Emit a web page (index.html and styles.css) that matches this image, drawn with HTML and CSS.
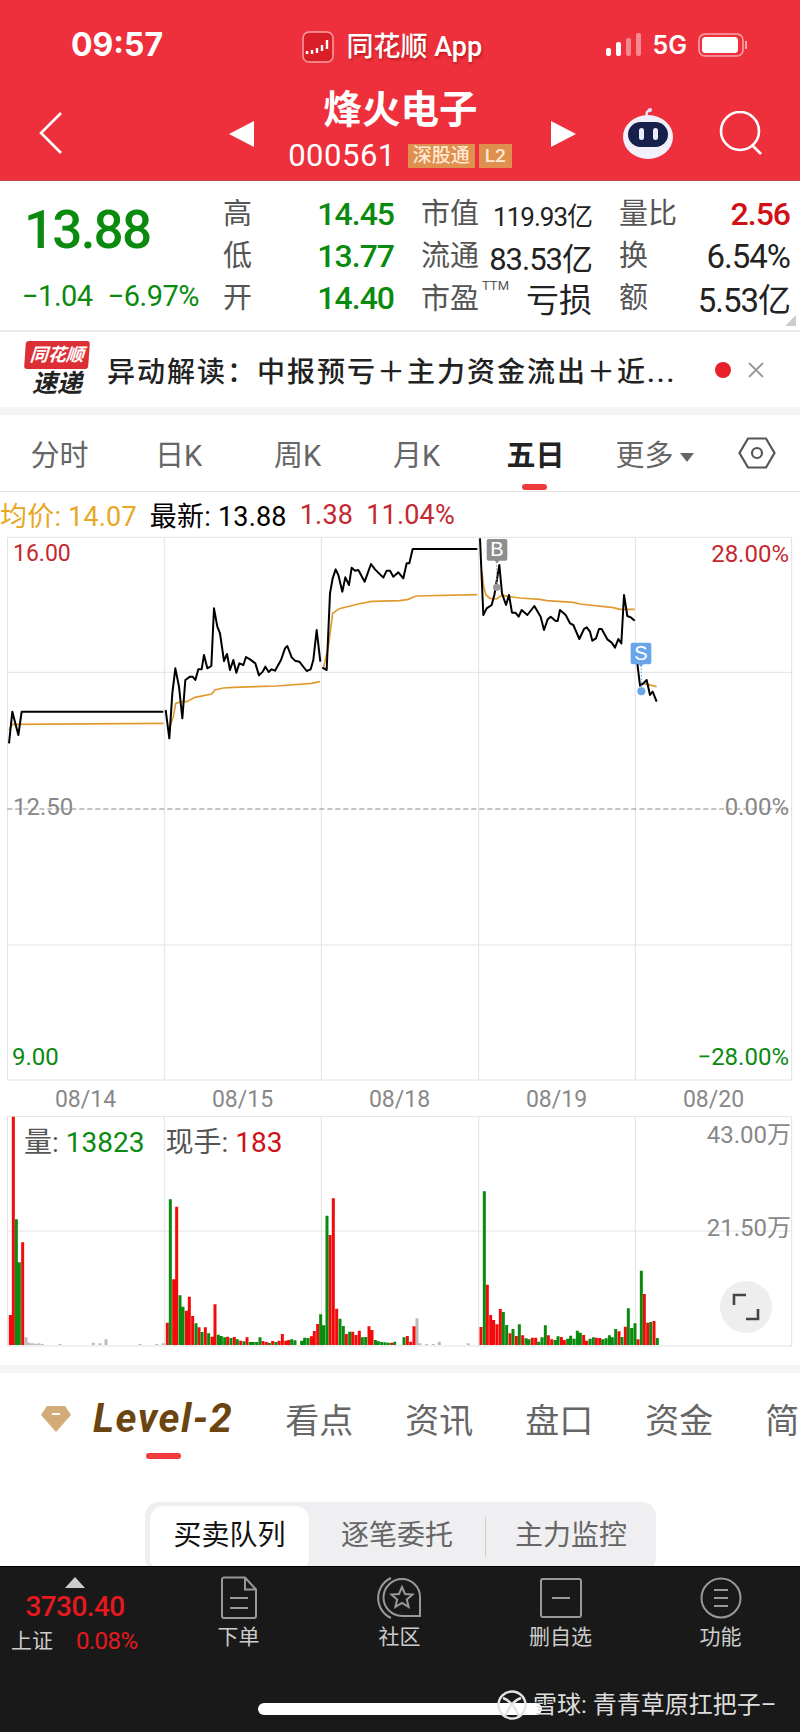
FILE: index.html
```html
<!DOCTYPE html>
<html>
<head>
    <title>烽火电子 000561</title>
    <link rel="stylesheet" href="styles.css">
</head>
<body>
<div class="phone">
    <header class="top">
        <div class="status">
            <span class="clock">09:57</span>
            <div class="status-app">
                <svg class="app-icon" viewBox="0 0 32 32" width="32" height="32">
                    <rect x="1" y="1" width="30" height="30" rx="6" fill="#d81f28" stroke="#f7a0a5" stroke-width="1.5"/>
                    <path d="M5 20v3M10 19v4M15 17v5M20 14v6M25 9v9" stroke="#fff" stroke-width="2.4"/>
                </svg>
                <span>同花顺 App</span>
            </div>
            <div class="status-right">
                <svg viewBox="0 0 36 24" width="36" height="24">
                    <rect x="0" y="15" width="5" height="8" rx="2" fill="#fff"/>
                    <rect x="10" y="9" width="5" height="14" rx="2" fill="#fff"/>
                    <rect x="20" y="5" width="5" height="18" rx="2" fill="#f7888f"/>
                    <rect x="30" y="0" width="5" height="23" rx="2" fill="#f7888f"/>
                </svg>
                <span class="net">5G</span>
                <svg viewBox="0 0 50 24" width="50" height="24">
                    <rect x="1" y="1" width="44" height="22" rx="6" fill="none" stroke="#f9a6ab" stroke-width="1.5"/>
                    <rect x="4" y="4" width="36" height="16" rx="3.5" fill="#fff"/>
                    <path d="M48 8v8" stroke="#f9a6ab" stroke-width="2"/>
                </svg>
            </div>
        </div>
        <div class="title-row">
            <svg class="back" viewBox="0 0 24 42" width="24" height="42"><path d="M22 1L2 21l20 20" fill="none" stroke="#fff" stroke-width="2.6"/></svg>
            <div class="title-center">
                <svg viewBox="0 0 25 26" width="25" height="26"><path d="M25 0v26L0 13z" fill="#fff"/></svg>
                <div class="title-text">
                    <div class="stock-name">烽火电子</div>
                    <div class="stock-code">
                        <span>000561</span>
                        <em class="badge badge-wide">深股通</em>
                        <em class="badge">L2</em>
                    </div>
                </div>
                <svg viewBox="0 0 25 26" width="25" height="26"><path d="M0 0v26l25-13z" fill="#fff"/></svg>
            </div>
            <svg class="robot" viewBox="0 0 52 52" width="52" height="52">
                <path d="M25 9c-1-3 0-5 3-6" fill="none" stroke="#e8e6f8" stroke-width="2.5"/>
                <circle cx="28" cy="3" r="2" fill="#e8e6f8"/>
                <ellipse cx="26" cy="30" rx="25" ry="22" fill="#f1f0fb"/>
                <rect x="6" y="15" width="40" height="25" rx="12.500" fill="#16204a"/>
                <rect x="17" y="21" width="5" height="12" rx="2.500" fill="#e8ecfa"/>
                <rect x="31" y="21" width="5" height="12" rx="2.500" fill="#e8ecfa"/>
            </svg>
            <svg class="search" viewBox="0 0 44 44" width="44" height="44">
                <circle cx="21" cy="20" r="19" fill="none" stroke="#fff" stroke-width="2.6"/>
                <path d="M33 34l9 9" stroke="#fff" stroke-width="2.6"/>
            </svg>
        </div>
    </header>

    <section class="stats">
        <div class="stats-main">
            <div class="price">13.88</div>
            <div class="change"><span>−1.04</span><span>−6.97%</span></div>
        </div>
        <div class="stats-grid">
            <div class="cell"><label>高</label><b class="green">14.45</b></div>
            <div class="cell"><label>市值</label><b class="dark small">119.93亿</b></div>
            <div class="cell"><label>量比</label><b class="red">2.56</b></div>
            <div class="cell"><label>低</label><b class="green">13.77</b></div>
            <div class="cell"><label>流通</label><b class="dark narrow">83.53亿</b></div>
            <div class="cell"><label>换</label><b class="dark">6.54%</b></div>
            <div class="cell"><label>开</label><b class="green">14.40</b></div>
            <div class="cell"><label>市盈<sup>TTM</sup></label><b class="dark loss">亏损</b></div>
            <div class="cell"><label>额</label><b class="dark">5.53亿</b></div>
        </div>
        <i class="corner"></i>
    </section>

    <section class="news">
        <div class="news-logo">
            <div class="news-logo-top">同花顺</div>
            <div class="news-logo-bottom">速递</div>
        </div>
        <div class="news-text">异动解读：中报预亏＋主力资金流出＋近...</div>
        <i class="news-dot"></i>
        <svg viewBox="0 0 16 16" width="16" height="16"><path d="M1 1l14 14M15 1L1 15" stroke="#999" stroke-width="1.8"/></svg>
    </section>

    <nav class="period">
        <a>分时</a>
        <a>日K</a>
        <a>周K</a>
        <a>月K</a>
        <a class="on">五日</a>
        <a>更多<i class="caret"></i></a>
        <svg viewBox="0 0 38 32" width="38" height="32">
            <path d="M10 1.500h18L36.500 16 28 30.500H10L1.500 16z" fill="none" stroke="#555" stroke-width="2.2"/>
            <circle cx="19" cy="16" r="5" fill="none" stroke="#555" stroke-width="2.2"/>
        </svg>
    </nav>

    <div class="legend">
        <span class="gold">均价: 14.07</span>
        <span class="black">最新: 13.88</span>
        <span class="dred">1.38</span>
        <span class="dred">11.04%</span>
    </div>

    <div class="chart">
        <svg viewBox="0 0 2400 1656" width="800" height="552">
            <path d="M22.500 22H2375V1650H22.500ZM493 22V1650M964 22V1650M1436 22V1650M1906 22V1650M22 427H2375M22 1245H2375" fill="none" stroke="#e2e2e2" stroke-width="3"/>
            <path d="M22 837H2375" fill="none" stroke="#8a8a8a" stroke-width="3" stroke-dasharray="15 9"/>
            <g fill="none" stroke="#e09a30" stroke-width="5">
                <path d="M27 600L37 583 490 580"/>
                <path d="M508 595L520 560 527 520 545 515 560 515 585 502 635 492 645 480 670 474 700 472 830 468 935 460 960 455"/>
                <path d="M970 415L985 350 998 250 1018 236 1075 222 1115 214 1200 212 1225 208 1248 198 1432 194"/>
                <path d="M1445 120L1452 175 1458 195 1470 205 1490 207 1505 196 1560 204 1620 208 1640 212 1720 217 1740 222 1840 233 1860 238 1904 238"/>
                <path d="M1930 460L1970 470"/>
            </g>
            <g fill="none" stroke="#000" stroke-width="6" stroke-linejoin="round">
                <path d="M27 640L37 545 55 615 65 545 490 545"/>
                <path d="M497 540L508 625 517 490 526 415 537 470 547 565 556 450 570 440 578 440 586 450 595 418 605 418 612 375 622 415 634 408 642 235 652 290 660 310 672 393 681 372 690 420 700 390 709 428 718 400 730 405 738 381 750 388 766 400 777 436 788 425 796 410 806 426 815 418 825 422 843 390 855 355 862 348 875 382 885 392 898 395 920 423 932 418 940 390 950 300 961 395"/>
                <path d="M967 413L980 420 990 190 998 145 1007 118 1015 135 1027 185 1036 142 1047 165 1055 113 1065 122 1075 120 1094 155 1113 102 1125 118 1150 143 1160 122 1170 122 1180 140 1195 127 1210 145 1220 100 1228 100 1238 57 1432 57"/>
                <path d="M1440 25L1450 255 1460 235 1475 225 1483 195 1498 105 1506 190 1518 225 1527 195 1536 248 1546 248 1556 260 1565 240 1582 255 1603 228 1622 260 1632 300 1643 268 1652 260 1667 273 1673 273 1680 240 1697 255 1710 280 1720 285 1738 327 1752 297 1760 292 1770 305 1777 332 1788 325 1797 297 1805 297 1822 328 1835 338 1845 353 1855 327 1864 340 1872 195 1882 258 1892 262 1904 272"/>
                <path d="M1911 392L1920 467 1930 460 1940 450 1950 495 1958 485 1970 515"/>
            </g>
            <path d="M1490 95V172" stroke="#999" stroke-width="3" stroke-dasharray="5 5"/>
            <circle cx="1490" cy="172" r="11" fill="#999"/>
            <path d="M1924 405V484" stroke="#6aa5ea" stroke-width="3" stroke-dasharray="5 5"/>
            <circle cx="1924" cy="484" r="12" fill="#6aa5ea"/>
            <path class="flag-grey" d="M1466 27h50a6 6 0 0 1 6 6v53a6 6 0 0 1-6 6h-18l-7 8-7-8h-18a6 6 0 0 1-6-6V33a6 6 0 0 1 6-6z"/>
            <text class="flag-text" x="1491" y="78">B</text>
            <path class="flag-blue" d="M1898 338h50a6 6 0 0 1 6 6v53a6 6 0 0 1-6 6h-18l-7 8-7-8h-18a6 6 0 0 1-6-6v-53a6 6 0 0 1 6-6z"/>
            <text class="flag-text" x="1923" y="390">S</text>
        </svg>
        <span class="axis tl dred">16.00</span>
        <span class="axis tr dred">28.00%</span>
        <span class="axis ml grey">12.50</span>
        <span class="axis mr grey">0.00%</span>
        <span class="axis bl green">9.00</span>
        <span class="axis br green">−28.00%</span>
    </div>

    <div class="dates">
        <span>08/14</span><span>08/15</span><span>08/18</span><span>08/19</span><span>08/20</span>
    </div>

    <div class="volume">
        <svg viewBox="0 48 2400 696" width="800" height="232">
            <path d="M22.500 49H2375V738H22.500ZM493 49V738M964 49V738M1436 49V738M1906 49V738M22 393H2375" fill="none" stroke="#e2e2e2" stroke-width="3"/>
            <path d="M78 735V712M87 735V728M97 735V730M107 735V731M117 735V730M127 735V732M180 735V732M280 735V728M300 735V730M318 735V718M420 735V732M470 735V732M490 735V730M1251 735V655M1260 735V730M1280 735V732M1300 735V732M1318 735V725M1405 735V730" stroke="#bbb" stroke-width="9"/>
            <path d="M31 735V645M40 735V50M68 735V427M502 735V668M521 735V538M530 735V320M559 735V632M568 735V590M578 735V648M597 735V682M616 735V682M636 735V710M645 735V613M683 735V710M703 735V711M722 735V722M741 735V712M789 735V723M799 735V726M818 735V723M837 735V722M847 735V702M857 735V722M866 735V720M934 735V709M943 735V693M953 735V672M990 735V405M1000 735V295M1010 735V626M1039 735V702M1058 735V695M1068 735V705M1078 735V692M1107 735V679M1116 735V690M1175 735V728M1222 735V708M1232 735V725M1242 735V679M1443 735V681M1462 735V554M1472 735V645M1481 735V660M1491 735V673M1501 735V627M1530 735V700M1549 735V708M1568 735V706M1597 735V713M1607 735V713M1645 735V706M1655 735V718M1684 735V711M1693 735V720M1751 735V705M1760 735V722M1789 735V713M1799 735V714M1857 735V694M1876 735V680M1914 735V718M1933 735V582M1943 735V668M1962 735V663" stroke="#f30b0b" stroke-width="9"/>
            <path d="M49 735V358M58 735V487M511 735V298M540 735V586M549 735V620M588 735V670M606 735V696M626 735V700M655 735V704M664 735V708M674 735V712M693 735V714M712 735V718M732 735V724M751 735V726M760 735V726M770 735V726M780 735V712M808 735V728M828 735V726M875 735V718M885 735V721M905 735V722M914 735V713M924 735V714M962 735V643M971 735V676M981 735V347M1020 735V656M1030 735V678M1049 735V695M1087 735V712M1097 735V711M1126 735V720M1135 735V724M1145 735V726M1155 735V727M1165 735V728M1184 735V725M1212 735V712M1453 735V274M1510 735V636M1520 735V675M1539 735V687M1558 735V673M1578 735V715M1587 735V718M1616 735V725M1626 735V712M1636 735V676M1665 735V720M1674 735V709M1703 735V716M1712 735V707M1722 735V716M1732 735V692M1741 735V698M1770 735V716M1780 735V712M1808 735V718M1818 735V715M1828 735V706M1837 735V712M1847 735V687M1866 735V711M1885 735V625M1895 735V684M1905 735V670M1924 735V512M1952 735V666M1972 735V714" stroke="#0a8a0f" stroke-width="9"/>
        </svg>
        <div class="vol-info">
            <span class="grey2">量: <b class="green">13823</b></span>
            <span class="grey2">现手: <b class="vol-red">183</b></span>
        </div>
        <span class="vol-label vol-top">43.00万</span>
        <span class="vol-label vol-mid">21.50万</span>
        <button class="expand">
            <svg viewBox="0 0 28 28" width="28" height="28"><path d="M2 12V2h12M26 16v10H14" fill="none" stroke="#444" stroke-width="2.6"/></svg>
        </button>
    </div>

    <div class="band"></div>

    <nav class="detail-tabs">
        <svg class="gem" viewBox="0 0 30 26" width="30" height="26">
            <path d="M6 0h18l6 9-15 17L0 9z" fill="#d2ab77"/>
            <path d="M11 8h8" stroke="#fff" stroke-width="2"/>
        </svg>
        <a class="level">Level-2<i></i></a>
        <a>看点</a>
        <a>资讯</a>
        <a>盘口</a>
        <a>资金</a>
        <a>简况</a>
    </nav>

    <div class="segment-wrap">
        <div class="segment">
            <span class="seg-on">买卖队列</span>
            <span>逐笔委托</span>
            <i></i>
            <span>主力监控</span>
        </div>
    </div>

    <footer class="bottom">
        <div class="index">
            <i class="up"></i>
            <div class="index-value">3730.40</div>
            <div class="index-row"><span>上证</span><em>0.08%</em></div>
        </div>
        <a class="tool">
            <svg viewBox="0 0 40 44" width="40" height="44">
                <path d="M5 1.500h21l11 12V40a2 2 0 0 1-2 2H5a2 2 0 0 1-2-2V3.500a2 2 0 0 1 2-2zM26 1.500v12h11M11 22h18M11 32h18" fill="none" stroke="#999" stroke-width="2"/>
            </svg>
            下单
        </a>
        <a class="tool">
            <svg viewBox="0 0 46 44" width="46" height="44">
                <path d="M14 2A22 22 0 0 0 14 42M25 3A18 18 0 0 1 43 21V40H25A18.500 18.500 0 0 1 25 3Z" fill="none" stroke="#999" stroke-width="2"/>
                <path d="M25 11l3 7 7.500.6-5.700 4.900 1.800 7.300-6.600-4-6.600 4 1.800-7.300-5.700-4.900 7.500-.6z" fill="none" stroke="#999" stroke-width="2"/>
            </svg>
            社区
        </a>
        <a class="tool">
            <svg viewBox="0 0 44 44" width="44" height="44">
                <rect x="2" y="3" width="40" height="38" rx="2" fill="none" stroke="#999" stroke-width="2"/>
                <path d="M13 22h18" stroke="#999" stroke-width="2"/>
            </svg>
            删自选
        </a>
        <a class="tool">
            <svg viewBox="0 0 44 44" width="44" height="44">
                <circle cx="22" cy="22" r="19.500" fill="none" stroke="#999" stroke-width="2"/>
                <path d="M15 14h14M15 22h14M15 30h14" stroke="#999" stroke-width="2"/>
            </svg>
            功能
        </a>
        <i class="home-bar"></i>
        <div class="watermark">
            <svg viewBox="0 0 30 30" width="30" height="30">
                <circle cx="15" cy="15" r="13.500" fill="none" stroke="#e4e4e4" stroke-width="2.400"/>
                <path d="M6 8c6 2 12 9 16 18M24 8c-6 2-12 9-16 18" fill="none" stroke="#e4e4e4" stroke-width="2.400"/>
            </svg>
            <span>雪球: 青青草原扛把子–</span>
        </div>
    </footer>
</div>
</body>
</html>
```

FILE: styles.css
```css
* {
    box-sizing: border-box;
}
body {
    margin: 0;
    background-color: #fff;
    font-family: Roboto, "Noto Sans CJK SC", sans-serif;
    color: #333;
}
i, em {
    font-style: normal;
}
.phone {
    width: 800px;
    height: 1732px;
    overflow: hidden;
    display: flex;
    flex-direction: column;
}
.green { color: #0a8a0f; }
.red { color: #d01016; }
.dred { color: #c5282f; }
.gold { color: #e6a823; }
.black { color: #000; }
.grey { color: #888; }
.grey2 { color: #555; }
.dark { color: #222; }

/* header */
.top {
    height: 181px;
    background-color: #ee303c;
    color: #fff;
    border-bottom: 1px solid #c9444c;
}
.status {
    height: 79px;
    padding: 28px 52px 0 71px;
    display: flex;
    justify-content: space-between;
    align-items: flex-start;
}
.clock {
    font-family: Inter, sans-serif;
    font-weight: 700;
    font-size: 32px;
    line-height: 34px;
}
.status-app {
    display: flex;
    align-items: center;
    gap: 12px;
    font-size: 27px;
    font-weight: 500;
    line-height: 36px;
    margin-top: 1px;
    margin-left: 16px;
    text-shadow: 1px 2px 3px rgba(120,0,0,0.45);
}
.status-right {
    display: flex;
    align-items: center;
    gap: 11px;
    margin-top: 5px;
}
.net {
    font-family: Inter, sans-serif;
    font-weight: 600;
    font-size: 25px;
    line-height: 24px;
}
.title-row {
    height: 101px;
    position: relative;
    display: flex;
    padding-left: 39px;
    padding-top: 33px;
    align-items: flex-start;
}
.title-center {
    position: absolute;
    left: 229px;
    top: 0;
    width: 347px;
    display: flex;
    justify-content: space-between;
    align-items: center;
    height: 100px;
}
.title-center svg {
    margin-top: 10px;
}
.title-text {
    text-align: center;
}
.stock-name {
    font-size: 38.500px;
    line-height: 48px;
    font-weight: 700;
    margin-left: -4px;
}
.stock-code {
    display: flex;
    align-items: center;
    font-size: 31px;
    line-height: 32px;
    letter-spacing: 0.500px;
    margin-top: 6px;
    margin-left: -5px;
}
.badge {
    margin-left: 4px;
    height: 24px;
    line-height: 24px;
    padding: 0 6px;
    font-size: 19px;
    font-weight: 500;
    letter-spacing: 0;
    background-color: #df8f4e;
    color: #ffe9d2;
}
.badge-wide {
    margin-left: 12px;
    padding: 0 5px;
}
.robot {
    position: absolute;
    left: 622px;
    top: 28px;
}
.search {
    position: absolute;
    left: 719px;
    top: 32px;
}

/* quote block */
.stats {
    height: 151px;
    position: relative;
    display: flex;
    border-bottom: 2px solid #e9e9e9;
}
.stats-main {
    width: 223px;
    padding-left: 24px;
}
.price {
    font-size: 53px;
    font-weight: 500;
    line-height: 60px;
    margin-top: 19px;
    letter-spacing: -1.800px;
    color: #0a8a0f;
}
.change {
    display: flex;
    gap: 15px;
    font-size: 29px;
    line-height: 34px;
    margin-top: 19px;
    margin-left: -2px;
    letter-spacing: -0.500px;
    color: #0a8a0f;
    white-space: nowrap;
}
.stats-grid {
    display: grid;
    grid-template-columns: repeat(3, 171px);
    grid-auto-rows: 42px;
    column-gap: 27px;
    padding-top: 12px;
}
.cell {
    display: flex;
    justify-content: space-between;
    align-items: center;
}
.cell label {
    font-size: 29px;
    color: #555;
    line-height: 36px;
}
.cell sup {
    font-size: 13px;
    line-height: 1;
    color: #555;
    vertical-align: 19px;
    margin-left: 3px;
}
.cell b {
    font-weight: 500;
    font-size: 32px;
    letter-spacing: -1px;
    white-space: nowrap;
}
.cell b.dark {
    font-weight: 400;
    font-size: 33px;
    letter-spacing: -1px;
}
.cell b.narrow {
    font-size: 31px;
    letter-spacing: -1px;
}
.cell b.small {
    font-size: 26px;
}
.cell b.loss {
    font-size: 33px;
    letter-spacing: 0;
}
.corner {
    position: absolute;
    right: 4px;
    bottom: 4px;
    width: 0;
    height: 0;
    border-left: 11px solid transparent;
    border-bottom: 11px solid #ccc;
}

/* news banner */
.news {
    height: 75px;
    padding: 0 36px 0 25px;
    display: flex;
    align-items: center;
}
.news-logo {
    width: 64px;
    flex-shrink: 0;
    text-align: center;
    font-weight: 700;
    font-style: italic;
}
.news-logo-top {
    height: 28px;
    line-height: 27px;
    font-size: 18px;
    color: #fff;
    background-color: #dd2e36;
    border-radius: 3px;
    transform: skewX(-4deg);
}
.news-logo-bottom {
    font-size: 25px;
    line-height: 30px;
    color: #222;
}
.news-text {
    margin-left: 18px;
    flex: 1;
    font-size: 28px;
    font-weight: 500;
    letter-spacing: 2px;
    color: #222;
    white-space: nowrap;
}
.news-dot {
    width: 16px;
    height: 16px;
    border-radius: 50%;
    background-color: #e8202c;
    margin-right: 17px;
}

/* period tabs */
.period {
    height: 85px;
    border-top: 8px solid #f4f4f4;
    border-bottom: 1px solid #e4e4e4;
    display: grid;
    grid-template-columns: repeat(6, 119px) 86px;
    align-items: center;
    justify-items: center;
    font-size: 29px;
    color: #666;
}
.period a {
    position: relative;
    white-space: nowrap;
}
.period a.on {
    color: #222;
    font-weight: 700;
}
.period a.on::after {
    content: "";
    position: absolute;
    left: 16px;
    top: 52px;
    width: 25px;
    height: 6px;
    border-radius: 3px;
    background-color: #ee3b3b;
}
.caret {
    display: inline-block;
    width: 0;
    height: 0;
    margin-left: 6px;
    vertical-align: 4px;
    border-left: 7px solid transparent;
    border-right: 7px solid transparent;
    border-top: 9px solid #666;
}
.legend {
    height: 45px;
    display: flex;
    align-items: center;
    font-size: 27px;
    letter-spacing: 0.200px;
    white-space: nowrap;
}
.legend .black { margin-left: 13px; }
.legend .dred { margin-left: 13px; }

/* price chart */
.chart {
    position: relative;
    height: 552px;
    margin-top: -7px;
}
.chart svg {
    display: block;
}
.flag-grey { fill: #8e8e8e; }
.flag-blue { fill: #6aa5ea; }
.flag-text {
    font-family: "Liberation Sans", sans-serif;
    font-size: 60px;
    fill: #fff;
    text-anchor: middle;
}
.axis {
    position: absolute;
    font-size: 24px;
    line-height: 26px;
}
.tl { left: 13px; top: 11px; font-size: 23px; }
.tr { right: 11px; top: 11px; }
.ml { left: 13px; top: 264px; }
.mr { right: 11px; top: 264px; }
.bl { left: 12px; top: 514px; }
.br { right: 11px; top: 514px; }
.dates {
    height: 34px;
    padding-left: 7px;
    display: grid;
    grid-template-columns: repeat(5, 157px);
    justify-items: center;
    align-items: center;
    font-size: 23px;
    color: #888;
}

/* volume chart */
.volume {
    position: relative;
    height: 249px;
}
.volume svg {
    display: block;
}
.vol-info {
    position: absolute;
    left: 24px;
    top: 12px;
    display: flex;
    gap: 21px;
    font-size: 28px;
    line-height: 30px;
}
.vol-info b {
    font-weight: 400;
}
.vol-red { color: #d01016; }
.vol-label {
    position: absolute;
    right: 9px;
    font-size: 24px;
    line-height: 30px;
    color: #888;
}
.vol-top { top: 4px; }
.vol-mid { top: 97px; }
.expand {
    position: absolute;
    left: 720px;
    top: 165px;
    width: 52px;
    height: 52px;
    border: none;
    padding: 0;
    border-radius: 50%;
    background-color: #eeeeee;
    display: flex;
    align-items: center;
    justify-content: center;
}
.band {
    height: 8px;
    background-color: #f4f4f4;
}

/* detail tabs */
.detail-tabs {
    height: 129px;
    padding: 0 0 38px 41px;
    display: flex;
    align-items: center;
    font-size: 34px;
    color: #666;
    white-space: nowrap;
}
.gem {
    flex-shrink: 0;
    margin-right: 22px;
}
.detail-tabs a {
    margin-right: 52px;
    flex-shrink: 0;
}
.detail-tabs a.level {
    position: relative;
    margin-right: 52px;
    font-size: 40px;
    font-weight: 700;
    font-style: italic;
    letter-spacing: 1.500px;
    color: #6b4510;
}
.level i {
    position: absolute;
    left: 53px;
    top: 58px;
    width: 35px;
    height: 6px;
    border-radius: 3px;
    background-color: #ee3b3b;
}
.segment-wrap {
    height: 64px;
    padding-left: 145px;
}
.segment {
    width: 511px;
    height: 70px;
    padding: 4px 0 0 5px;
    display: flex;
    align-items: flex-start;
    font-size: 28px;
    color: #666;
    background-color: #efeff1;
    border-radius: 14px;
}
.segment span {
    flex: 0 0 176px;
    height: 66px;
    line-height: 60px;
    text-align: center;
}
.segment span:last-child {
    flex-basis: 170px;
}
.segment span.seg-on {
    flex: 0 0 159px;
    background-color: #fff;
    border-radius: 14px;
    color: #111;
}
.segment i {
    width: 1px;
    height: 40px;
    margin-top: 11px;
    background-color: #ccc;
}

/* bottom bar */
.bottom {
    position: relative;
    height: 166px;
    background-color: #191919;
    border-top: 1px solid #000;
    display: grid;
    grid-template-columns: 158px repeat(3, 161px) 159px;
    align-items: start;
    color: #ccc;
}
.index {
    padding-top: 10px;
    position: relative;
    text-align: center;
}
.up {
    display: block;
    width: 0;
    height: 0;
    margin: 0 0 0 65px;
    border-left: 10px solid transparent;
    border-right: 10px solid transparent;
    border-bottom: 11px solid #ccc;
}
.index-value {
    width: 150px;
    font-size: 28px;
    font-weight: 500;
    line-height: 34px;
    letter-spacing: -0.600px;
    margin-top: 2px;
    color: #e5191e;
}
.index-row {
    display: flex;
    padding-left: 11px;
    gap: 23px;
    font-size: 21px;
    line-height: 28px;
    margin-top: 3px;
}
.index-row em {
    color: #e5191e;
    font-size: 24px;
    letter-spacing: -0.600px;
}
.tool {
    padding-top: 9px;
    display: flex;
    flex-direction: column;
    align-items: center;
    gap: 4px;
    font-size: 21px;
    line-height: 26px;
}
.home-bar {
    position: absolute;
    left: 258px;
    top: 136px;
    width: 284px;
    height: 12px;
    border-radius: 6px;
    background-color: #fff;
}
.watermark {
    position: absolute;
    left: 497px;
    top: 123px;
    display: flex;
    align-items: center;
    gap: 6px;
    font-size: 24px;
    line-height: 30px;
    color: #ddd;
    white-space: nowrap;
}
```
